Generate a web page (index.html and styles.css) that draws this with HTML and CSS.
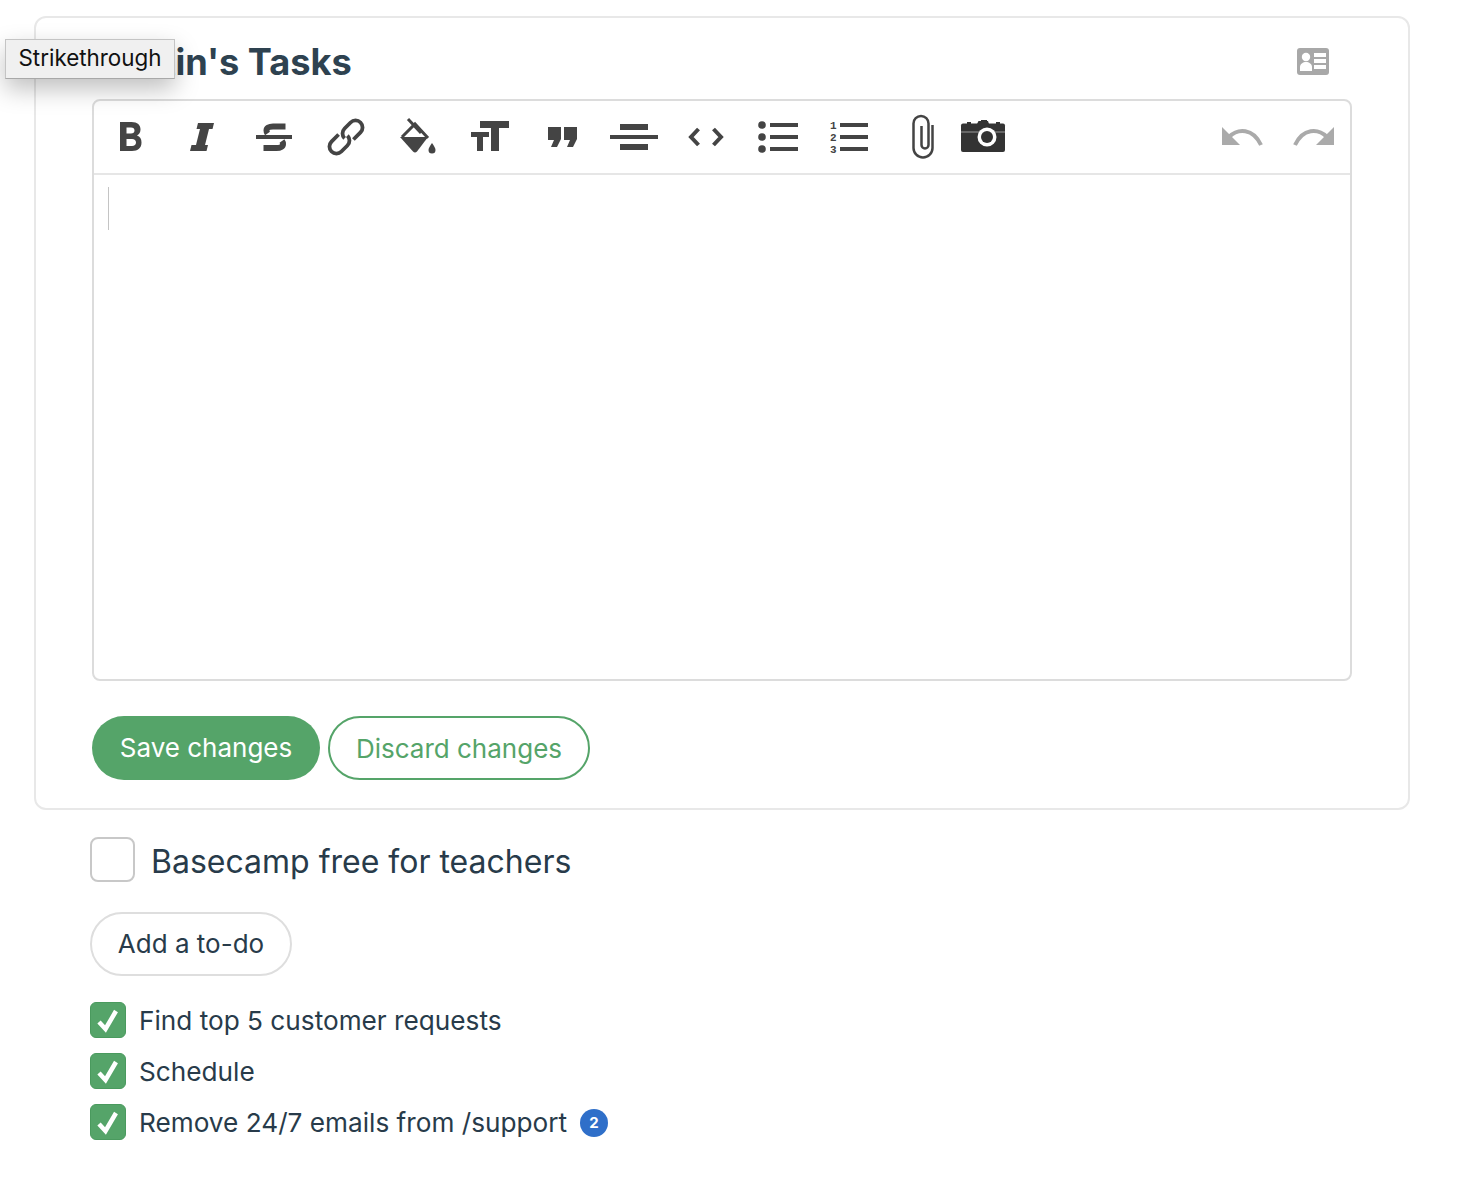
FILE: index.html
```html
<!DOCTYPE html>
<html lang="en">
<head>
    <meta charset="UTF-8">
    <title>Martin's Tasks</title>
    <link rel="stylesheet" href="styles.css">
</head>
<body>
    <div class="tooltip">Strikethrough</div>

    <div class="card">
        <div class="title-row">
            <h1 class="list-title">Martin's Tasks</h1>
            <svg class="card-icon" viewBox="0 0 32 27">
                <rect width="32" height="27" rx="3" fill="#a8a8a8"/>
                <circle cx="9" cy="9" r="4.200" fill="#fff"/>
                <path d="M3 23v-4c0-3 3-5 6-5s6 2 6 5v4z" fill="#fff"/>
                <path d="M17 5h12v4H17zM17 11h12v4H17zM17 17h12v4H17z" fill="#fff"/>
            </svg>
        </div>

        <div class="editor">
            <div class="toolbar">
                <button class="tool"><svg viewBox="0 0 48 48"><path fill-rule="evenodd" d="M14 9h11.500c6 0 9 3 9 7.500 0 3-1.500 5-3.500 6 3 1 4.500 3.500 4.500 7 0 5.500-3.500 8.500-9.500 8.500H14zM20.500 14.500v6h4.500c2.300 0 3.500-1.200 3.500-3s-1.200-3-3.500-3zM20.500 26v7h5.500c2.500 0 4-1.300 4-3.500s-1.500-3.500-4-3.500z"/></svg></button>
                <button class="tool"><svg viewBox="0 0 48 48"><path d="M20 10h16l-1.500 6H31l-4 16h3l-1.500 6H12l1.500-6h4.500l4-16h-3.500z"/></svg></button>
                <button class="tool"><svg viewBox="0 0 48 48"><rect x="6" y="22" width="36" height="4"/><path class="line" stroke-width="6" d="M35.500 13.500H23c-4 0-6.500 1.500-6.500 4 0 1 .3 2 1 3M13.500 35h13c4 0 6.500-1.500 6.500-4 0-1-.3-2-1-3"/></svg></button>
                <button class="tool"><svg viewBox="0 0 48 48"><g class="line" stroke-width="3.800" transform="rotate(-45 24 24)"><path d="M20.500 17h-10a7 7 0 0 0 0 14H19a7 7 0 0 0 7-7"/><path d="M27.500 31h10a7 7 0 0 0 0-14H29a7 7 0 0 0-7 7"/></g></svg></button>
                <button class="tool"><svg viewBox="0 0 48 48"><path d="M14 6l13 14" class="line" stroke-width="3"/><path class="line" stroke-width="3" d="M8 24l13-13 13 14"/><path d="M6 24h28l-11 14.500q-2 2-4 0z"/><path d="M38 30c2 3 3.500 5 3.500 7a3.500 3.500 0 0 1-7 0c0-2 1.500-4 3.500-7z"/></svg></button>
                <button class="tool"><svg viewBox="0 0 48 48"><path d="M14 8h29v7H33v23h-8V15H14z"/><path d="M5 19h18v5h-6v14h-6V24H5z"/></svg></button>
                <button class="tool"><svg viewBox="0 0 48 48"><path d="M10 14h13v12l-4 8h-6l3-7h-6zM26 14h13v12l-4 8h-6l3-7h-6z"/></svg></button>
                <button class="tool"><svg viewBox="0 0 48 48"><path d="M10 11h28v6H10zM0 22h48v4H0zM10 31h28v6H10z"/></svg></button>
                <button class="tool"><svg viewBox="0 0 48 48"><path class="line" stroke-width="4" d="M16.500 16L9 24l7.500 8M31.500 16l7.500 8-7.500 8"/></svg></button>
                <button class="tool"><svg viewBox="0 0 48 48"><circle cx="8" cy="12" r="3.800"/><circle cx="8" cy="24" r="3.800"/><circle cx="8" cy="36" r="3.800"/><path d="M16 10h28v4H16zM16 22h28v4H16zM16 34h28v4H16z"/></svg></button>
                <button class="tool"><svg viewBox="0 0 48 48"><text class="num" x="4" y="15.500">1</text><text class="num" x="4" y="27.500">2</text><text class="num" x="4" y="39.500">3</text><path d="M14 10h28v4H14zM14 22h28v4H14zM14 34h28v4H14z"/></svg></button>
                <button class="tool"><svg viewBox="0 0 48 48"><path class="line" stroke-width="2.500" d="M34.500 12v23a9.500 9.500 0 0 1-19 0V10.500a7.500 7.500 0 0 1 15 0V32a3.500 3.500 0 0 1-7 0V13"/></svg></button>
                <button class="tool tool-camera"><svg viewBox="0 0 48 48"><g fill="#333"><rect x="2" y="10.500" width="44" height="28.500" rx="2"/><rect x="8" y="9" width="4" height="3"/><rect x="37" y="9" width="4" height="3"/><path d="M18 11l1.500-3H22V7h6v1h1l1 3z"/></g><rect x="2" y="18.500" width="44" height="1" fill="#999"/><circle cx="28" cy="24" r="9.500" fill="#fff"/><circle cx="28" cy="24" r="6" fill="#333"/></svg></button>
                <div class="toolbar-gap"></div>
                <button class="tool tool-muted"><svg viewBox="0 0 48 48"><path d="M4 14v18h18z"/><path class="line" stroke-width="4" d="M11 24c9-9 24-9 32 8"/></svg></button>
                <button class="tool tool-muted"><svg viewBox="0 0 48 48"><path d="M44 14v18H26z"/><path class="line" stroke-width="4" d="M37 24c-9-9-24-9-32 8"/></svg></button>
            </div>
            <div class="editor-body"><div class="caret"></div></div>
        </div>

        <div class="actions">
            <button class="btn btn-save">Save changes</button>
            <button class="btn btn-discard">Discard changes</button>
        </div>
    </div>

    <div class="todos">
        <div class="new-todo">
            <div class="box-empty"></div>
            <div class="new-todo-text">Basecamp free for teachers</div>
        </div>
        <button class="btn btn-add">Add a to-do</button>
        <div class="done-list">
            <div class="done-item">
                <div class="box-done"><svg viewBox="0 0 34 34"><path d="M8 19l6.500 7L25 8"/></svg></div>
                <span>Find top 5 customer requests</span>
            </div>
            <div class="done-item">
                <div class="box-done"><svg viewBox="0 0 34 34"><path d="M8 19l6.500 7L25 8"/></svg></div>
                <span>Schedule</span>
            </div>
            <div class="done-item">
                <div class="box-done"><svg viewBox="0 0 34 34"><path d="M8 19l6.500 7L25 8"/></svg></div>
                <span>Remove 24/7 emails from /support</span>
                <span class="badge">2</span>
            </div>
        </div>
    </div>
</body>
</html>
```

FILE: styles.css
```css
body {
    margin: 0;
    padding: 16px 60px 0 34px;
    background: #fff;
    color: #283b4a;
    font-family: Inter, "Liberation Sans", sans-serif;
}
button {
    font-family: inherit;
}
.tooltip {
    position: absolute;
    left: 5px;
    top: 39px;
    width: 170px;
    height: 40px;
    box-sizing: border-box;
    background: #f0f0f0;
    border: 1px solid #c4c4c4;
    border-bottom-color: #a8a8a8;
    box-shadow: 0 10px 24px rgba(0, 0, 0, 0.25);
    color: #111;
    font-size: 22.4px;
    line-height: 35px;
    text-align: center;
    z-index: 10;
}
.card {
    border: 2px solid #e8e8e8;
    border-radius: 12px;
    padding: 22px 56px 28px;
}
.title-row {
    display: flex;
    justify-content: space-between;
    align-items: center;
    height: 44px;
    margin-bottom: 15px;
}
.list-title {
    margin: 0;
    color: #2e4250;
    font-size: 36.2px;
    font-weight: 700;
    line-height: 42px;
}
.card-icon {
    width: 32px;
    height: 27px;
    margin-right: 23px;
    margin-top: -2px;
}
.editor {
    border: 2px solid #dcdcdc;
    border-radius: 8px;
    height: 582px;
    box-sizing: border-box;
}
.toolbar {
    display: flex;
    height: 72px;
    border-bottom: 2px solid #e6e6e6;
}
.toolbar-gap {
    flex: 1;
}
.tool {
    width: 72px;
    height: 72px;
    padding: 0;
    border: none;
    background: none;
    display: flex;
    justify-content: center;
    align-items: center;
    fill: #444;
    stroke: #444;
    stroke-width: 0;
}
.tool svg {
    width: 48px;
    height: 48px;
}
.tool .line {
    fill: none;
}
.tool-camera {
    width: 50px;
}
.tool-muted {
    fill: #aaa;
    stroke: #aaa;
}
.num {
    font-family: "Liberation Mono", monospace;
    font-size: 11px;
    font-weight: 700;
}
.editor-body {
    padding: 12px 14px;
}
.caret {
    width: 1px;
    height: 43px;
    background: #c4c4c4;
}
.actions {
    display: flex;
    gap: 8px;
    margin-top: 35px;
}
.btn {
    height: 64px;
    box-sizing: border-box;
    border-radius: 32px;
    font-size: 26px;
    background: #fff;
}
.btn-save {
    width: 228px;
    padding-bottom: 3px;
    background: #55a469;
    border: none;
    color: #fff;
}
.btn-discard {
    width: 262px;
    border: 2px solid #55a469;
    color: #55a469;
}
.todos {
    margin: 27px 0 0 56px;
}
.new-todo {
    display: flex;
    align-items: center;
    gap: 16px;
}
.box-empty {
    width: 45px;
    height: 45px;
    box-sizing: border-box;
    border: 2px solid #c8c8c8;
    border-radius: 8px;
}
.new-todo-text {
    padding-top: 4px;
    font-size: 32px;
}
.btn-add {
    display: block;
    width: 202px;
    margin-top: 30px;
    padding-bottom: 3px;
    border: 2px solid #dedede;
    color: #283b4a;
}
.done-list {
    display: flex;
    flex-direction: column;
    gap: 15px;
    margin-top: 26px;
}
.done-item {
    display: flex;
    align-items: center;
    gap: 13px;
    font-size: 26.2px;
}
.box-done {
    width: 36px;
    height: 36px;
    box-sizing: border-box;
    background: #55a469;
    border: 1px solid #4a9a5e;
    border-radius: 6px;
}
.box-done svg {
    display: block;
    width: 34px;
    height: 34px;
    fill: none;
    stroke: #fff;
    stroke-width: 4.5;
}
.badge {
    width: 28px;
    height: 28px;
    margin: 1px 0 0 0;
    border-radius: 50%;
    background: #2f6fc9;
    color: #fff;
    font-size: 15px;
    font-weight: 700;
    line-height: 28px;
    text-align: center;
}
```
